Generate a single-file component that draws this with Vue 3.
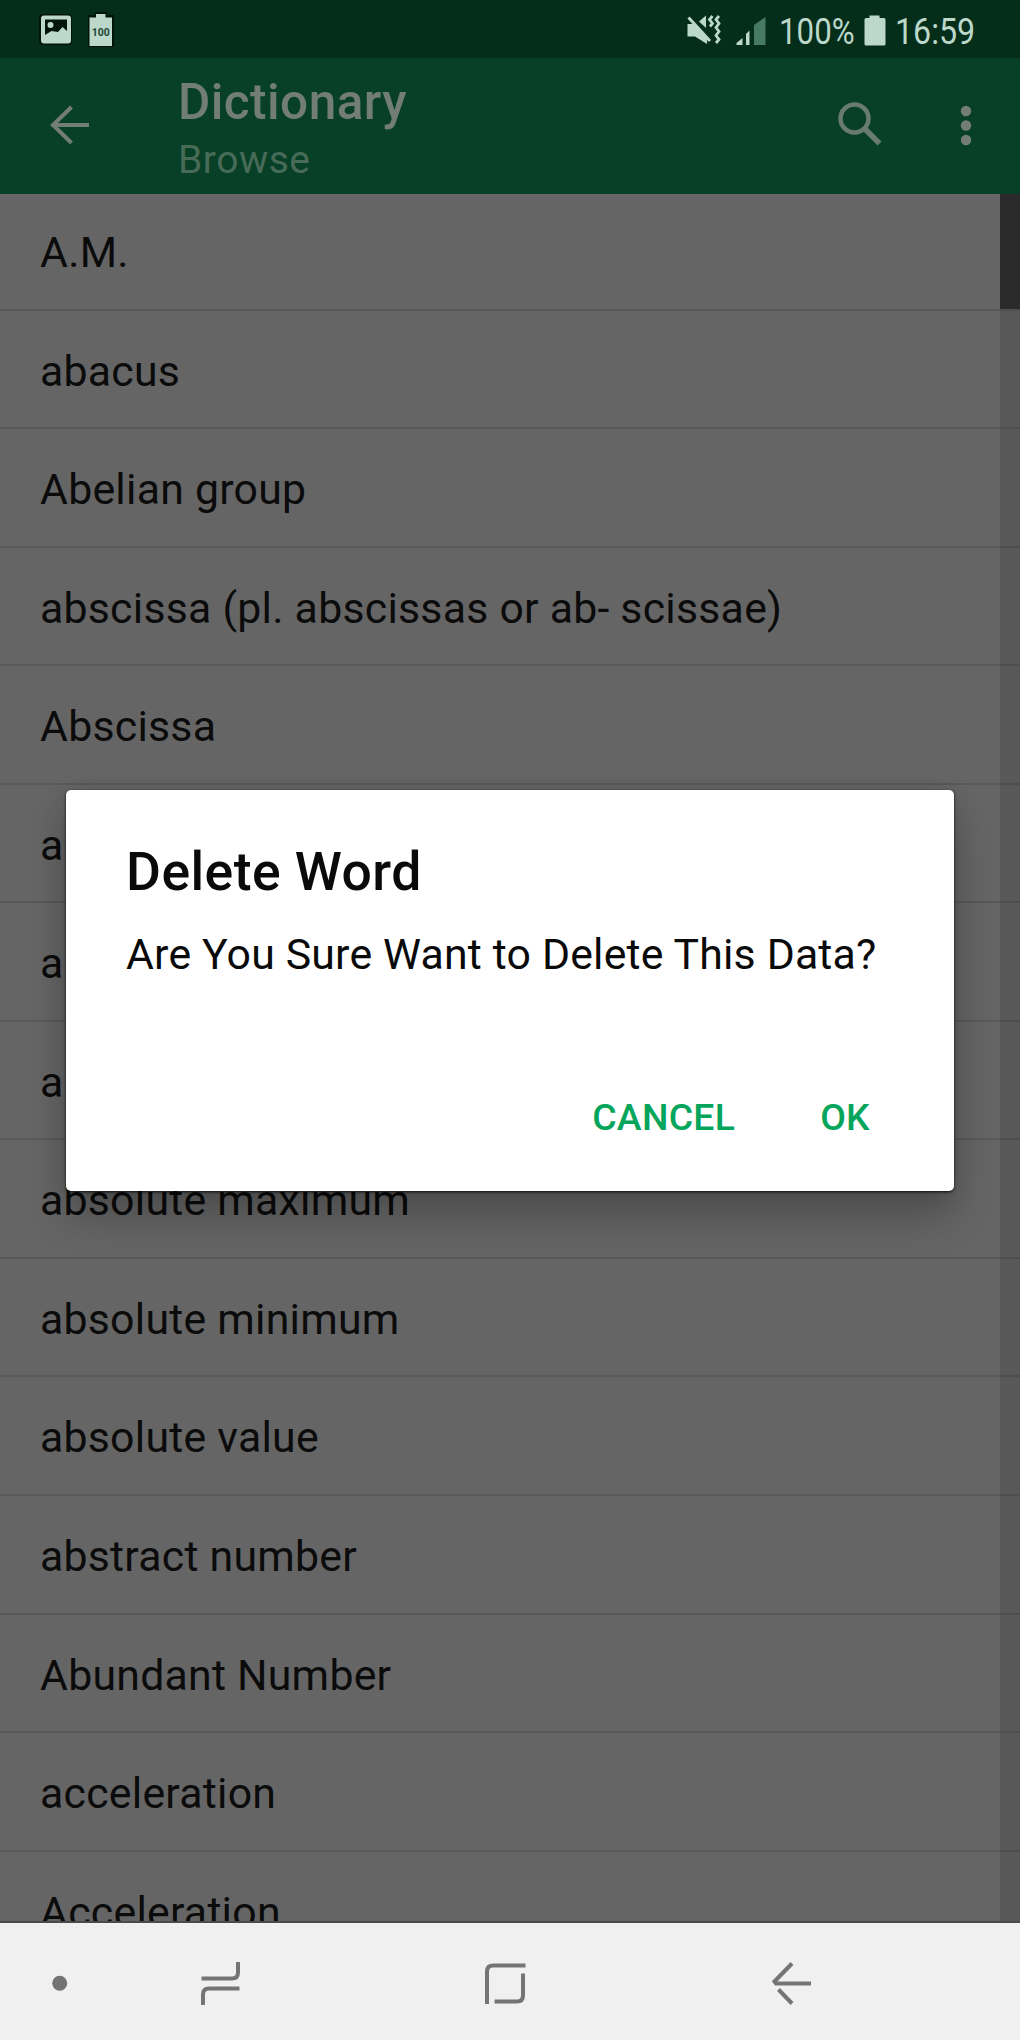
<script setup>
const words = [
  'A.M.',
  'abacus',
  'Abelian group',
  'abscissa (pl. abscissas or ab- scissae)',
  'Abscissa',
  'a',
  'a',
  'a',
  'absolute maximum',
  'absolute minimum',
  'absolute value',
  'abstract number',
  'Abundant Number',
  'acceleration',
  'Acceleration',
]
</script>

<template>
  <div class="phone">
    <header class="status">
      <svg class="notif" width="80" height="40" viewBox="0 0 80 40">
        <rect x="0" y="0" width="33" height="31" rx="4" fill="#000" opacity=".55" />
        <rect x="2" y="1.500" width="30" height="28" rx="3" fill="#bcd8ca" />
        <path d="M6 5.500h22V17l-4.500-4-4.500 5-6.500-1L6 21z" fill="#03150c" />
        <circle cx="11.500" cy="11" r="3" fill="#bcd8ca" />
        <path d="M49 1h7v-3h12v3h7v32H49z" fill="#000" opacity=".55" />
        <path d="M50.500 3.500H57V0h9.500v3.500H73V32H50.500z" fill="#bcd8ca" />
        <text x="61.800" y="21.500" text-anchor="middle" class="tiny">100</text>
      </svg>
      <div class="spacer"></div>
      <svg class="signals" width="84" height="36" viewBox="0 0 84 36">
        <g fill="#bcd8ca">
          <path d="M1.500 9H9L21 22V29L9 21.500H1.500z" />
          <path d="M13 6.500 20 0.500V13z" />
          <path d="M2.500 2.500 24 26" fill="none" stroke="#bcd8ca" stroke-width="3" />
          <path d="M26.500 1l-3 3.500 3 4-2.500 3M33 1l-3 3.500 3 4-3 4 3 4-3 4 3 4-3 3.500" fill="none" stroke="#bcd8ca" stroke-width="2.800" />
          <path d="M50.500 30v-2l6-5V30z" />
          <path d="M60 19l3.500-3.500V30H60z" />
        </g>
        <path d="M68 30V10L79.500 2v28z" fill="#477a60" />
      </svg>
      <span class="pct"><span class="narrow">100%</span></span>
      <svg class="battery" width="22" height="32" viewBox="0 0 22 32">
        <path d="M.5 4.500q0-1.500 1.500-1.500h3.500V.5h10V3H20q1.500 0 1.500 1.500V29q0 1.500-1.500 1.500H2Q.5 30.500.5 29z" fill="#bcd8ca" />
      </svg>
      <span class="clock"><span class="narrow">16:59</span></span>
    </header>

    <div class="toolbar">
      <svg class="back" width="42" height="42" viewBox="0 0 42 42" fill="none" stroke="#727d75" stroke-width="4">
        <path d="M40 21H4M22.500 3 4 21l18.500 18" />
      </svg>
      <div class="titles">
        <div class="title">Dictionary</div>
        <div class="subtitle">Browse</div>
      </div>
      <svg class="search" width="48" height="48" viewBox="0 0 48 48" fill="none" stroke="#697b70">
        <circle cx="18.500" cy="18.500" r="14" stroke-width="4.500" />
        <path d="M28.500 28.500 43.500 43.500" stroke-width="5.500" />
      </svg>
      <svg class="more" width="12" height="42" viewBox="0 0 12 42" fill="#727d75">
        <circle cx="6" cy="6" r="5.200" /><circle cx="6" cy="20.500" r="5.200" /><circle cx="6" cy="35" r="5.200" />
      </svg>
    </div>

    <main class="list">
      <div v-for="(w, i) in words" :key="i" class="row">{{ w }}</div>
      <div class="track"><div class="thumb"></div></div>
    </main>

    <nav class="nav">
      <svg width="1020" height="117" viewBox="0 0 1020 117" fill="none" stroke="#747474" stroke-width="4">
        <circle cx="59.700" cy="60.300" r="7.500" fill="#747474" stroke="none" />
        <path d="M201.500 55.500H232q6 0 6-6V39M239.500 65.500H209q-6 0-6 6V82" />
        <path d="M525.500 42.500H493q-6 0-6 6V81M494.500 78.500H517q6 0 6-6V50.500" />
        <path d="M811 60.500H776L774.500 58.500 792 40.500M778.500 66.500 792 80.500" />
      </svg>
    </nav>

    <section class="dialog">
      <h1>Delete Word</h1>
      <p>Are You Sure Want to Delete This Data?</p>
      <div class="actions">
        <button class="cancel">CANCEL</button>
        <button class="ok">OK</button>
      </div>
    </section>
  </div>
</template>

<style>
body { margin: 0; overflow: hidden; }
</style>

<style scoped>
.phone {
  position: relative;
  width: 1020px;
  height: 2040px;
  display: flex;
  flex-direction: column;
  overflow: hidden;
  font-family: Roboto, sans-serif;
  background: #656565;
}
.status {
  height: 58px;
  flex: none;
  display: flex;
  align-items: flex-start;
  background: #042d1a;
  color: #bcd8ca;
  box-sizing: border-box;
}
.notif { margin: 14px 0 0 39px; overflow: visible; }
.tiny { font: 700 10.500px Roboto, sans-serif; fill: #1c4531; }
.spacer { flex: 1; }
.signals { margin: 15px 9px 0 0; }
.pct, .clock { font-size: 37px; line-height: 40px; margin-top: 12px; white-space: nowrap; }
.pct { width: 85px; }
.clock { width: 125px; }
.narrow { display: inline-block; transform: scaleX(0.845); transform-origin: 0 50%; }
.clock .narrow { transform: scaleX(0.87); }
.battery { margin: 15px 9px 0 0; }
.toolbar {
  height: 136px;
  flex: none;
  display: flex;
  align-items: flex-start;
  background: #074026;
}
.back { margin: 46px 0 0 49px; }
.titles { margin-left: 87px; flex: 1; white-space: nowrap; }
.title { font-size: 49.500px; font-weight: 500; line-height: 56px; letter-spacing: 0.45px; margin-top: 16px; color: #727d75; }
.subtitle { font-size: 39px; line-height: 44px; letter-spacing: 0.5px; margin-top: 8px; color: #486b58; }
.search { margin: 42px 76px 0 0; }
.more { margin: 47px 48px 0 0; }
.list {
  position: relative;
  flex: 1;
  overflow: hidden;
  background: #656565;
  border-bottom: 2px solid #4a4a4a;
}
.row {
  box-sizing: border-box;
  height: 118.550px;
  padding: 2px 0 0 40px;
  border-bottom: 2px solid #595959;
  font-size: 42.800px;
  line-height: 116px;
  letter-spacing: 0.24px;
  color: #0b0b0b;
  white-space: nowrap;
}
.row:first-child { height: 116.500px; padding-top: 0; }
.track {
  position: absolute;
  top: 0;
  right: 0;
  bottom: 0;
  width: 20px;
  background: rgba(0, 0, 0, 0.12);
}
.thumb { height: 115px; background: #2a2a2a; }
.nav { height: 117px; flex: none; background: #f0f0f0; }
.nav svg { display: block; }
.dialog {
  position: absolute;
  left: 66px;
  top: 790px;
  width: 888px;
  height: 400.500px;
  box-sizing: border-box;
  border-radius: 5px;
  background: #fff;
  padding: 50px 60px 0;
  box-shadow: 0 1px 3px rgba(0, 0, 0, 0.85), 0 28px 40px rgba(0, 0, 0, 0.2), 0 4px 26px rgba(0, 0, 0, 0.12);
}
h1 { margin: 0; font-size: 53.500px; font-weight: 500; line-height: 64px; letter-spacing: 0.45px; color: #0a0a0a; white-space: nowrap; }
p { margin: 25px 0 0; font-size: 42.800px; line-height: 50px; letter-spacing: 0.18px; color: #0a0a0a; white-space: nowrap; }
.actions { display: flex; justify-content: flex-end; margin-top: 111px; padding-right: 24px; gap: 85px; }
button {
  border: 0;
  padding: 0;
  background: none;
  font: 500 37.300px/54px Roboto, sans-serif;
  letter-spacing: 0.3px;
  color: #05a55c;
}
</style>
